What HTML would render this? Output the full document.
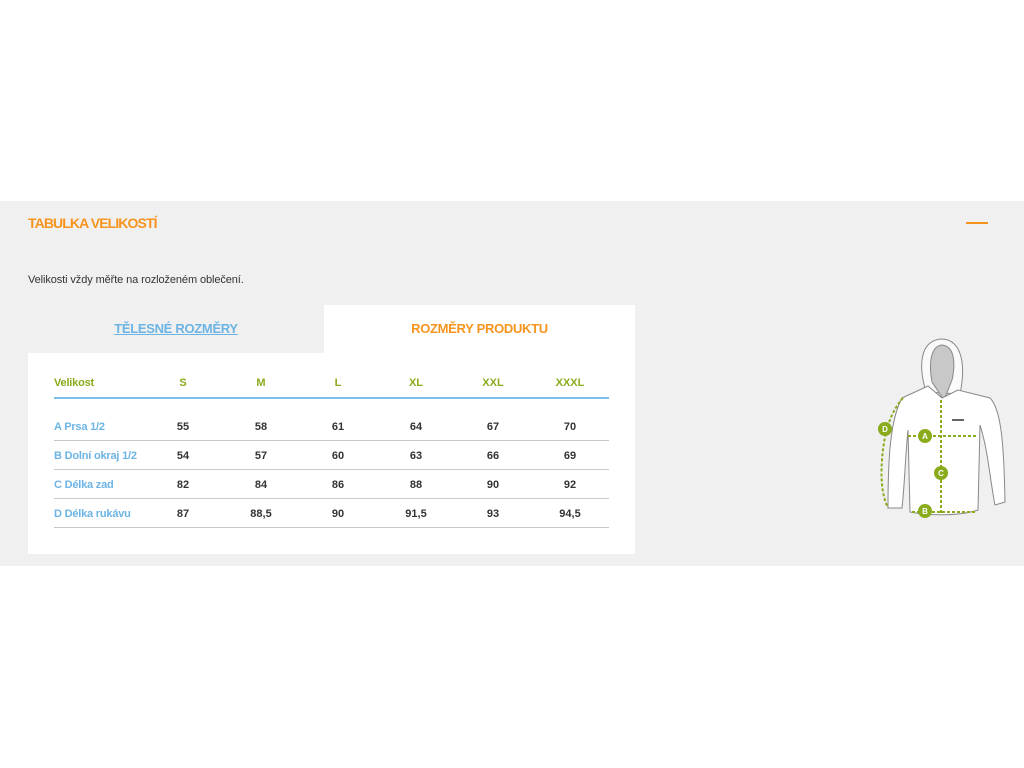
<!DOCTYPE html>
<html><head><meta charset="utf-8"><style>
*{margin:0;padding:0;box-sizing:border-box}
body{width:1024px;height:768px;background:#fff;font-family:"Liberation Sans Narrow","Liberation Sans",sans-serif;position:relative;overflow:hidden}
.band{position:absolute;left:0;top:201px;width:1024px;height:365px;background:#f0f0f0}
.t{position:absolute;white-space:nowrap}
.title{left:28px;top:215px;font-size:14px;font-weight:bold;color:#f7941d;letter-spacing:-0.9px}
.dash{position:absolute;left:966px;top:222px;width:22px;height:2px;background:#f7941d}
.note{left:28px;top:274px;font-size:11px;color:#333;letter-spacing:-0.1px}
.tab{position:absolute;left:324px;top:305px;width:311px;height:49px;background:#fff}
.panel{position:absolute;left:28px;top:353px;width:607px;height:201px;background:#fff}
.tab1{left:28px;top:321px;width:296px;text-align:center;font-size:13px;font-weight:bold;color:#6cb4e4;text-decoration:underline;letter-spacing:-0.3px}
.tab2{left:324px;top:321px;width:311px;text-align:center;font-size:13px;font-weight:bold;color:#f7941d;letter-spacing:-0.3px}
.c{position:absolute;font-size:11px;font-weight:bold;text-align:center;width:60px;margin-left:-30px}
.h{color:#8aab1c}
.v{color:#333}
.lbl{position:absolute;left:54px;font-size:11px;font-weight:bold;color:#6cb4e4;letter-spacing:-0.2px}
.line{position:absolute;left:54px;width:555px;height:1px;background:#c8c8c8}
</style></head><body>
<div class="band"></div>
<div class="t title">TABULKA VELIKOSTÍ</div>
<div class="dash"></div>
<div class="t note">Velikosti vždy měřte na rozloženém oblečení.</div>
<div class="tab"></div>
<div class="panel"></div>
<div class="t tab1">TĚLESNÉ ROZMĚRY</div>
<div class="t tab2">ROZMĚRY PRODUKTU</div>
<div class="lbl" style="top:377px;color:#8aab1c">Velikost</div>
<div class="c h" style="left:183px;top:377px">S</div>
<div class="c h" style="left:261px;top:377px">M</div>
<div class="c h" style="left:338px;top:377px">L</div>
<div class="c h" style="left:416px;top:377px">XL</div>
<div class="c h" style="left:493px;top:377px">XXL</div>
<div class="c h" style="left:570px;top:377px">XXXL</div>
<div class="line" style="top:397px;height:2px;background:#7cc0ea"></div>

<div class="lbl" style="top:421px">A Prsa 1/2</div>
<div class="c v" style="left:183px;top:421px">55</div><div class="c v" style="left:261px;top:421px">58</div><div class="c v" style="left:338px;top:421px">61</div><div class="c v" style="left:416px;top:421px">64</div><div class="c v" style="left:493px;top:421px">67</div><div class="c v" style="left:570px;top:421px">70</div>
<div class="line" style="top:440px"></div>
<div class="lbl" style="top:450px">B Dolní okraj 1/2</div>
<div class="c v" style="left:183px;top:450px">54</div><div class="c v" style="left:261px;top:450px">57</div><div class="c v" style="left:338px;top:450px">60</div><div class="c v" style="left:416px;top:450px">63</div><div class="c v" style="left:493px;top:450px">66</div><div class="c v" style="left:570px;top:450px">69</div>
<div class="line" style="top:469px"></div>
<div class="lbl" style="top:479px">C Délka zad</div>
<div class="c v" style="left:183px;top:479px">82</div><div class="c v" style="left:261px;top:479px">84</div><div class="c v" style="left:338px;top:479px">86</div><div class="c v" style="left:416px;top:479px">88</div><div class="c v" style="left:493px;top:479px">90</div><div class="c v" style="left:570px;top:479px">92</div>
<div class="line" style="top:498px"></div>
<div class="lbl" style="top:508px">D Délka rukávu</div>
<div class="c v" style="left:183px;top:508px">87</div><div class="c v" style="left:261px;top:508px">88,5</div><div class="c v" style="left:338px;top:508px">90</div><div class="c v" style="left:416px;top:508px">91,5</div><div class="c v" style="left:493px;top:508px">93</div><div class="c v" style="left:570px;top:508px">94,5</div>
<div class="line" style="top:527px"></div>

<svg style="position:absolute;left:860px;top:330px" width="160" height="200" viewBox="0 0 160 200">
<g stroke="#888" stroke-width="1" fill="#fff">
<path d="M66 62 C58 35 60 10 82 9 C102 10 106 35 100 64 Z" fill="#fafafa"/>
<path d="M72 52 C68 30 72 16 82 15 C94 16 96 32 92 50 L84 70 Z" fill="#c8c8c8"/>
<path d="M42 68 L68 56 L82 68 L98 60 L130 68 C142 80 144 120 145 172 L135 175 C130 150 128 120 120 95 L118 180 C100 186 70 186 50 182 L48 100 C45 130 45 150 42 178 L28 178 C28 130 30 90 42 68 Z"/>
</g>
<g stroke="#8aab1c" stroke-width="2" stroke-dasharray="3 2" fill="none">
<path d="M43 68 C32 80 24 100 22 130 C20 155 24 170 28 178"/>
<path d="M48 106 L118 106"/>
<path d="M81 70 L81 183"/>
<path d="M52 182 L116 182"/>
</g>
<g fill="#8aab1c">
<circle cx="25" cy="99" r="7"/><circle cx="65" cy="106" r="7"/><circle cx="81" cy="143" r="7"/><circle cx="65" cy="181" r="7"/>
</g>
<g fill="#fff" font-family="Liberation Sans" font-size="8" font-weight="bold" text-anchor="middle">
<text x="25" y="102">D</text><text x="65" y="109">A</text><text x="81" y="146">C</text><text x="65" y="184">B</text>
</g>
<rect x="92" y="89" width="12" height="2" fill="#666"/>
</svg>
</body></html>
